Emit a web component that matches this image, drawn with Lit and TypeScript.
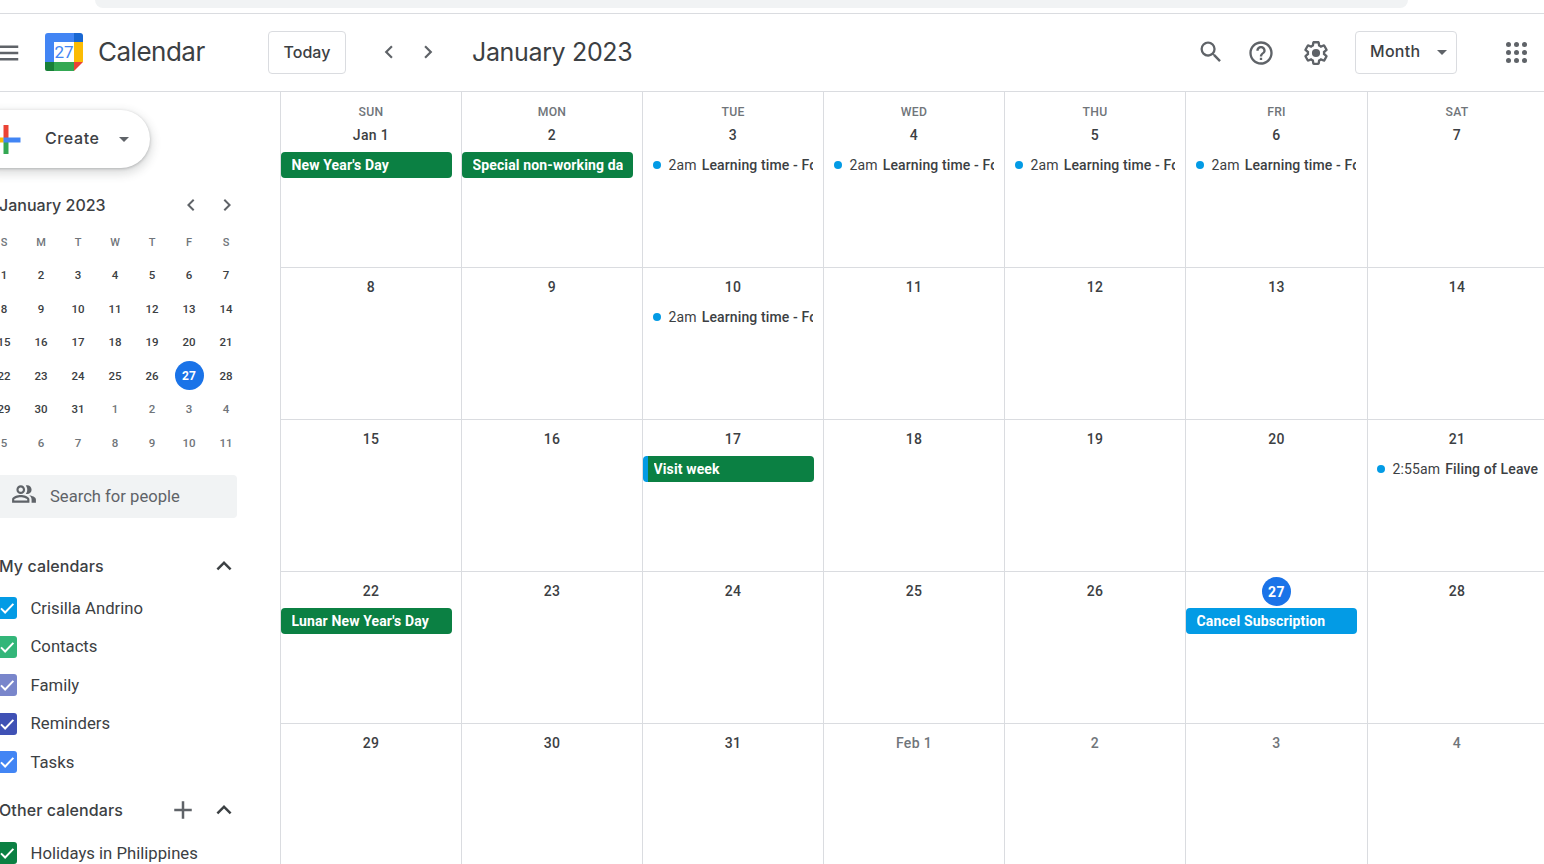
import { LitElement, html, css, svg } from "lit";
import { customElement } from "lit/decorators.js";

const ICON = {
  search: "M15.5 14h-.79l-.28-.27A6.471 6.471 0 0 0 16 9.5 6.5 6.5 0 1 0 9.5 16c1.61 0 3.09-.59 4.23-1.57l.27.28v.79l5 4.99L20.49 19l-4.99-5zm-6 0C7.01 14 5 11.99 5 9.5S7.01 5 9.5 5 14 7.01 14 9.5 11.99 14 9.5 14z",
  help: "M11 18h2v-2h-2v2zm1-16C6.48 2 2 6.48 2 12s4.48 10 10 10 10-4.48 10-10S17.52 2 12 2zm0 18c-4.41 0-8-3.59-8-8s3.59-8 8-8 8 3.59 8 8-3.59 8-8 8zm0-14c-2.21 0-4 1.79-4 4h2c0-1.1.9-2 2-2s2 .9 2 2c0 2-3 1.75-3 5h2c0-2.25 3-2.5 3-5 0-2.21-1.79-4-4-4z",
  gear: "M13.85 22.25h-3.7c-.74 0-1.36-.54-1.45-1.27l-.27-1.89c-.27-.14-.53-.29-.79-.46l-1.8.72c-.7.26-1.47-.03-1.81-.65L2.2 15.53c-.35-.66-.2-1.44.36-1.88l1.53-1.19c-.01-.15-.02-.3-.02-.46 0-.15.01-.31.02-.46l-1.52-1.19c-.59-.45-.74-1.26-.37-1.88l1.85-3.19c.34-.62 1.11-.9 1.79-.63l1.81.73c.26-.17.52-.32.78-.46l.27-1.91c.09-.7.71-1.25 1.44-1.25h3.7c.74 0 1.36.54 1.45 1.27l.27 1.89c.27.14.53.29.79.46l1.8-.72c.71-.26 1.48.03 1.82.65l1.84 3.18c.36.66.2 1.44-.36 1.88l-1.52 1.19c.01.15.02.3.02.46s-.01.31-.02.46l1.52 1.19c.56.45.72 1.23.37 1.86l-1.86 3.22c-.34.62-1.11.9-1.8.63l-1.8-.72c-.26.17-.52.32-.78.46l-.27 1.91c-.1.68-.72 1.22-1.46 1.22zm-3.23-2h2.76l.37-2.55.53-.22c.44-.18.88-.44 1.34-.78l.45-.34 2.38.96 1.38-2.4-2.03-1.58.07-.56c.03-.26.06-.51.06-.78s-.03-.53-.06-.78l-.07-.56 2.03-1.58-1.39-2.4-2.39.96-.45-.35c-.42-.32-.87-.58-1.33-.77l-.52-.22-.37-2.55h-2.76l-.37 2.55-.53.21c-.44.19-.88.44-1.34.79l-.45.33-2.38-.95-1.39 2.39 2.03 1.58-.07.56a7 7 0 0 0-.06.79c0 .26.02.53.06.78l.07.56-2.03 1.58 1.38 2.4 2.39-.96.45.35c.43.33.86.58 1.33.77l.53.22.38 2.55zM12 15.5a3.5 3.5 0 1 0 0-7 3.5 3.5 0 0 0 0 7z",
  people: "M16.67 13.13C18.04 14.06 19 15.32 19 17v3h4v-3c0-2.18-3.57-3.47-6.33-3.87zM15 12c2.21 0 4-1.79 4-4s-1.79-4-4-4c-.47 0-.91.1-1.33.24C14.5 5.27 15 6.58 15 8s-.5 2.73-1.33 3.76c.42.14.86.24 1.33.24zM9 12c2.21 0 4-1.79 4-4s-1.79-4-4-4-4 1.79-4 4 1.79 4 4 4zm0-6c1.1 0 2 .9 2 2s-.9 2-2 2-2-.9-2-2 .9-2 2-2zm0 7c-2.67 0-8 1.34-8 4v3h16v-3c0-2.66-5.33-4-8-4zm6 5H3v-.99C3.2 16.29 6.3 15 9 15s5.8 1.29 6 2v1z",
  left: "M15.41 7.41 14 6l-6 6 6 6 1.41-1.41L10.83 12z",
  right: "M8.59 16.59 10 18l6-6-6-6-1.41 1.41L13.17 12z",
  up: "M7.41 15.41 12 10.83l4.59 4.58L18 14l-6-6-6 6z",
  plus: "M19 13h-6v6h-2v-6H5v-2h6V5h2v6h6v2z",
  menu: "M3 18h18v-2H3v2zm0-5h18v-2H3v2zm0-7v2h18V6H3z",
};

const icon = (d: string, size: number, cls = "") => html`<svg class=${cls} width=${size} height=${size} viewBox="0 0 24 24" fill="currentColor"><path d=${d}></path></svg>`;

type Ev = { kind: "bar" | "dot"; color?: string; time?: string; title: string; stripe?: boolean };
const learning: Ev = { kind: "dot", time: "2am", title: "Learning time - Focus" };
const green = "#0b8043";

const CELLS: { label: string; today?: boolean; muted?: boolean; ev?: Ev }[] = [
  { label: "Jan 1", ev: { kind: "bar", color: green, title: "New Year's Day" } },
  { label: "2", ev: { kind: "bar", color: green, title: "Special non-working day" } },
  { label: "3", ev: learning }, { label: "4", ev: learning }, { label: "5", ev: learning }, { label: "6", ev: learning },
  { label: "7" },
  { label: "8" }, { label: "9" }, { label: "10", ev: learning }, { label: "11" }, { label: "12" }, { label: "13" }, { label: "14" },
  { label: "15" }, { label: "16" }, { label: "17", ev: { kind: "bar", color: green, title: "Visit week", stripe: true } },
  { label: "18" }, { label: "19" }, { label: "20" },
  { label: "21", ev: { kind: "dot", time: "2:55am", title: "Filing of Leave" } },
  { label: "22", ev: { kind: "bar", color: green, title: "Lunar New Year's Day" } },
  { label: "23" }, { label: "24" }, { label: "25" }, { label: "26" },
  { label: "27", today: true, ev: { kind: "bar", color: "#039be5", title: "Cancel Subscription" } },
  { label: "28" },
  { label: "29" }, { label: "30" }, { label: "31" },
  { label: "Feb 1", muted: true }, { label: "2", muted: true }, { label: "3", muted: true }, { label: "4", muted: true },
];
const WEEK = ["SUN", "MON", "TUE", "WED", "THU", "FRI", "SAT"];
const MINI_HEAD = ["S", "M", "T", "W", "T", "F", "S"];
const MINI: [number, boolean][] = [
  ...Array.from({ length: 31 }, (_, i) => [i + 1, false] as [number, boolean]),
  ...Array.from({ length: 11 }, (_, i) => [i + 1, true] as [number, boolean]),
];
const MY = [
  ["Crisilla Andrino", "#039be5"], ["Contacts", "#33b679"], ["Family", "#7986cb"], ["Reminders", "#3f51b5"], ["Tasks", "#4285f4"],
];

@customElement("app-root")
export class AppRoot extends LitElement {
  static styles = css`
    :host { display: block; width: 1544px; height: 864px; overflow: hidden; background: #fff; position: relative;
      font-family: Roboto, "Liberation Sans", sans-serif; color: #3c4043; }
    .strip { height: 13px; border-bottom: 1px solid #dadce0; padding-left: 95px; box-sizing: content-box; }
    .pill { width: 1313px; height: 8px; background: #f1f3f4; border-radius: 0 0 12px 12px; }
    .header { height: 77px; border-bottom: 1px solid #dadce0; display: flex; align-items: center; }
    .menu { color: #5f6368; margin-left: -8px; width: 30px; height: 30px; display: block; flex: none; }
    .logo { margin: -1px 0 0 23px; flex: none; display: block; }
    .logo text { font: 400 17px Roboto, sans-serif; fill: #4285f4; }
    .brand { margin: -1px 0 0 15px; width: 170px; font: 400 26px/30px Inter, sans-serif; letter-spacing: -0.5px; color: #3c4043; flex: none; }
    .btn { height: 43px; box-sizing: border-box; border: 1px solid #dadce0; border-radius: 4px; display: flex; align-items: center;
      font: 500 16px Inter, sans-serif; color: #3c4043; flex: none; margin-top: -1px; }
    .today { width: 78px; justify-content: center; }
    .navs { display: flex; gap: 13px; margin: -2px 0 0 30px; color: #5f6368; flex: none; }
    .navs svg { display: block; }
    .title { margin: -1px 0 0 31px; font: 400 25px/30px Inter, sans-serif; color: #3c4043; flex: 1; letter-spacing: -0.35px; }
    .tools { display: flex; align-items: center; color: #5f6368; flex: none; }
    .tools svg { display: block; }
    .i1 { margin-right: 22px; margin-top: -2px; }
    .i2 { margin-right: 27px; }
    .i3 { margin-right: 25px; }
    .month { width: 102px; padding-left: 14px; gap: 17px; }
    .month span { letter-spacing: .3px; margin-top: -2px; }
    .caret { width: 0; height: 0; border-left: 5.5px solid transparent; border-right: 5.5px solid transparent; border-top: 5.5px solid #5f6368; flex: none; }
    .apps { display: grid; grid-template-columns: repeat(3, 5px); gap: 3px; margin-left: 49px; margin-right: 17px; }
    .apps i { width: 5px; height: 5px; border-radius: 50%; background: #5f6368; }

    .body { display: flex; height: 772px; }
    .side { width: 280px; flex: none; position: relative; overflow: hidden; }
    .create { margin: 18px 0 0 -30px; width: 180px; height: 58px; border-radius: 29px; background: #fff; display: flex; align-items: center;
      box-shadow: 0 1px 3px rgba(60,64,67,.3), 0 4px 8px 3px rgba(60,64,67,.15); font: 500 16px Inter, sans-serif; }
    .create svg { display: block; margin-left: 21px; flex: none; }
    .create span { margin: -2px 0 0 24px; color: #3c4043; width: 56px; letter-spacing: .6px; }
    .create .caret { margin-left: 18px; }
    .mini-head { margin-top: 24px; display: flex; align-items: center; height: 26px; font: 500 16px Inter, sans-serif; white-space: nowrap; margin-left: -1px; width: 240px; color: #3c4043; }
    .mini-head span { flex: 1; }
    .mini-head div { display: flex; gap: 12px; color: #5f6368; }
    .mini-head svg { display: block; }
    .mini { margin-top: 7px; margin-left: -14.5px; display: grid; grid-template-columns: repeat(7, 37px); grid-auto-rows: 33.5px; text-align: center; font-size: 11.5px; font-weight: 500; color: #3c4043; }
    .mini > * { display: flex; align-items: center; justify-content: center; }
    .mini .h { color: #70757a; font-size: 11px; padding-top: 1px; box-sizing: border-box; }
    .mini .m { color: #70757a; }
    .mini b { width: 29px; height: 29px; border-radius: 50%; background: #1a73e8; color: #fff; display: flex; align-items: center; justify-content: center; font-weight: 700; font-size: 12px; }
    .people { margin: 15px 0 0 -20px; width: 257px; height: 43px; background: #f1f3f4; border-radius: 4px; display: flex; align-items: center; color: #5f6368; font-size: 16.6px; }
    .people svg { margin-left: 31px; display: block; flex: none; margin-top: -4px; }
    .people span { margin-left: 13px; }
    .sec { display: flex; align-items: center; height: 26px; margin-top: 35px; width: 240px; font: 500 16px Inter, sans-serif; color: #3c4043; margin-left: -1px; }
    .sec span { flex: 1; white-space: nowrap; letter-spacing: .1px; }
    .sec svg { display: block; color: #3c4043; width: 30px; height: 30px; flex: none; }
    .sec .p { margin-right: 11px; color: #5f6368; }
    .list { margin-top: 10.4px; }
    .row { display: flex; align-items: center; height: 38.5px; margin-left: -5px; font-size: 16.7px; color: #3c4043; white-space: nowrap; }
    .cb { width: 22px; height: 22px; border-radius: 3px; display: flex; align-items: center; justify-content: center; flex: none; margin-right: 13.5px; }
    .cb svg { display: block; margin-left: 1px; }
    .sec2 { margin-top: 15.6px; }
    .list2 { margin-top: 10.9px; }

    .grid { flex: none; width: 1266px; display: grid; grid-template-columns: 181px 181px 181px 181px 181px 182px 179px; grid-template-rows: 176px repeat(4, 152px); }
    .cell { border-left: 1px solid #dadce0; border-bottom: 1px solid #dadce0; box-sizing: border-box; padding-top: 5px; min-width: 0; overflow: hidden; }
    .cell.first { padding-top: 12px; }
    .cell:nth-child(7n) .dot { margin-left: 9px; }
    .wd { height: 16px; margin-bottom: 1px; text-align: center; font-size: 12.2px; font-weight: 500; color: #70757a; line-height: 16px; letter-spacing: .3px; }
    .date { height: 29px; display: flex; align-items: center; justify-content: center; font-size: 14px; font-weight: 500; color: #3c4043; margin-bottom: 2px; letter-spacing: .35px; padding-bottom: 2px; box-sizing: border-box; }
    .date.m { color: #70757a; }
    .date b { width: 29px; height: 29px; margin-bottom: -2px; border-radius: 50%; background: #1a73e8; color: #fff; display: flex; align-items: center; justify-content: center; font-weight: 700; font-size: 14px; }
    .ev { height: 26px; width: 171px; box-sizing: border-box; border-radius: 4px; display: flex; align-items: center; overflow: hidden; white-space: nowrap; font-size: 14px; letter-spacing: .13px; }
    .ev.plain { width: 170px; }
    .bar { color: #fff; font-weight: 700; padding-left: 10.5px; }
    .bar span { flex: 1; min-width: 0; overflow: hidden; margin-right: 10px; }
    .bar.stripe { border-left: 5px solid #039be5; padding-left: 5.5px; }
    .dot { width: 8px; height: 8px; border-radius: 50%; background: #039be5; flex: none; margin: 0 7.6px 0 10px; }
    .time { color: #3c4043; margin-right: 5px; }
    .ttl { font-weight: 500; color: #3c4043; }
  `;

  render() {
    const plus = svg`<path d="M12.5 1H17.5V16H12.5Z" fill="#ea4335"/><path d="M12.5 16H17.5V30H12.5Z" fill="#34a853"/><path d="M0 13.5H12.5V18.5H0Z" fill="#fbbc04"/><path d="M12.5 13.5H29.5V18.5H12.5Z" fill="#4285f4"/>`;
    return html`
      <div class="strip"><div class="pill"></div></div>
      <div class="header">
        ${icon(ICON.menu, 30, "menu")}
        <svg class="logo" width="38" height="38" viewBox="0 0 38 38">
          <path d="M3 0H29V9H9V29H0V3A3 3 0 0 1 3 0Z" fill="#4285f4"/>
          <path d="M29 0H35A3 3 0 0 1 38 3V9H29Z" fill="#1967d2"/>
          <path d="M29 9H38V29H29Z" fill="#fbbc04"/>
          <path d="M9 29H29V38H9Z" fill="#34a853"/>
          <path d="M0 29H9V38H2A2 2 0 0 1 0 36Z" fill="#188038"/>
          <path d="M29 29H38L29 38Z" fill="#ea4335"/>
          <text x="19" y="25" text-anchor="middle">27</text>
        </svg>
        <div class="brand">Calendar</div>
        <div class="btn today">Today</div>
        <div class="navs">${icon(ICON.left, 26)}${icon(ICON.right, 26)}</div>
        <div class="title">January 2023</div>
        <div class="tools">
          ${icon(ICON.search, 28, "i1")}${icon(ICON.help, 28, "i2")}${icon(ICON.gear, 28, "i3")}
          <div class="btn month"><span>Month</span><i class="caret"></i></div>
          <div class="apps">${Array.from({ length: 9 }, () => html`<i></i>`)}</div>
        </div>
      </div>
      <div class="body">
        <div class="side">
          <div class="create">
            <svg width="30" height="31" viewBox="0 0 30 31">${plus}</svg>
            <span>Create</span><i class="caret"></i>
          </div>
          <div class="mini-head"><span>January 2023</span><div>${icon(ICON.left, 24)}${icon(ICON.right, 24)}</div></div>
          <div class="mini">
            ${MINI_HEAD.map((h) => html`<div class="h">${h}</div>`)}
            ${MINI.map(([n, m]) => html`<div class=${m ? "m" : ""}>${n === 27 && !m ? html`<b>27</b>` : n}</div>`)}
          </div>
          <div class="people">${icon(ICON.people, 26)}<span>Search for people</span></div>
          <div class="sec"><span>My calendars</span>${icon(ICON.up, 30)}</div>
          <div class="list">
            ${MY.map(([n, c]) => this.row(n, c))}
          </div>
          <div class="sec sec2"><span>Other calendars</span>${icon(ICON.plus, 30, "p")}${icon(ICON.up, 30)}</div>
          <div class="list list2">${this.row("Holidays in Philippines", green)}</div>
        </div>
        <div class="grid">
          ${CELLS.map((c, i) => html`
            <div class="cell ${i < 7 ? "first" : ""}">
              ${i < 7 ? html`<div class="wd">${WEEK[i]}</div>` : ""}
              <div class="date ${c.muted ? "m" : ""}">${c.today ? html`<b>${c.label}</b>` : c.label}</div>
              ${c.ev ? this.ev(c.ev) : ""}
            </div>`)}
        </div>
      </div>
    `;
  }

  row(name: string, color: string) {
    return html`<div class="row"><span class="cb" style="background:${color}"><svg width="18" height="18" viewBox="0 0 24 24" fill="none" stroke="#fff" stroke-width="2.6"><path d="M4 12.5 9.5 18 20.5 6.5"></path></svg></span>${name}</div>`;
  }

  ev(e: Ev) {
    if (e.kind === "bar") {
      return html`<div class="ev bar ${e.stripe ? "stripe" : ""}" style="background:${e.color}"><span>${e.title}</span></div>`;
    }
    return html`<div class="ev plain"><i class="dot"></i><span class="time">${e.time}</span><span class="ttl">${e.title}</span></div>`;
  }
}
